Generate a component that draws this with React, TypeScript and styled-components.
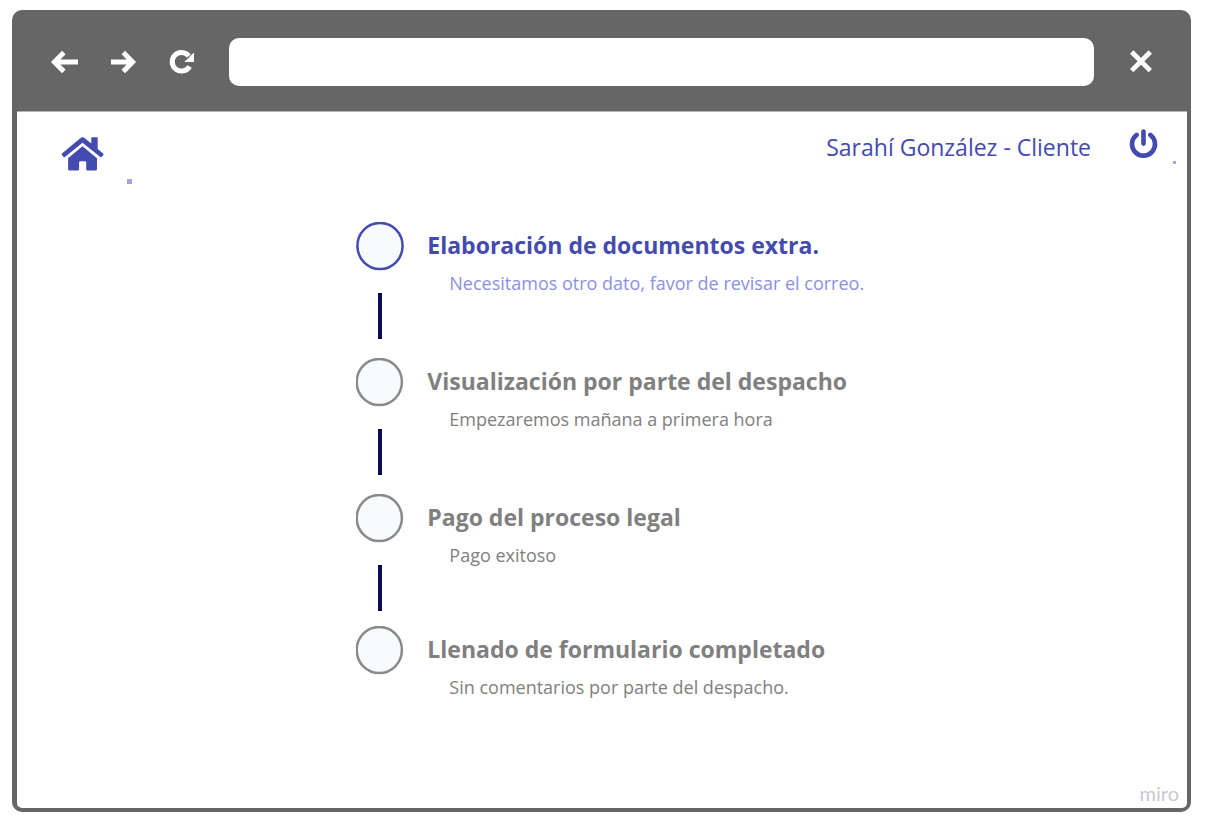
import React from "react";
import styled, { createGlobalStyle } from "styled-components";

const colors = {
  frame: "#666666",
  brand: "#434ab0",
  brandSoft: "#8b90e4",
  muted: "#808080",
  mutedStroke: "#8a8a8a",
  connector: "#0b0b4f",
  marker: "#f7fbfd",
};

const GlobalStyle = createGlobalStyle`
  *, *::before, *::after { box-sizing: border-box; }
  body {
    margin: 0;
    background: #ffffff;
    font-family: "Open Sans", "Noto Sans", sans-serif;
  }
`;

const Page = styled.div`
  display: flex;
  min-height: 100vh;
  padding: 10px 15px 17px 12px;
`;

const BrowserWindow = styled.div`
  display: flex;
  flex: 1;
  flex-direction: column;
  min-width: 0;
  padding: 0 4px 4px 5px;
  border-radius: 10px;
  background: ${colors.frame};
`;

const Toolbar = styled.div`
  display: flex;
  align-items: center;
  padding: 28px 34px 25px;
`;

const NavButtons = styled.nav`
  display: flex;
  gap: 32px;
  margin-right: 34px;
`;

const IconButton = styled.button`
  display: flex;
  flex: none;
  padding: 0;
  border: 0;
  background: none;
  color: inherit;
  cursor: pointer;
`;

const ToolbarButton = styled(IconButton)`
  color: #ffffff;
`;

const AddressBar = styled.input`
  flex: 1;
  min-width: 0;
  height: 48px;
  margin-right: 35px;
  padding: 0 16px;
  border: 0;
  border-radius: 10px;
  background: #ffffff;
  font: 18px "Open Sans", sans-serif;
`;

const Content = styled.main`
  display: flex;
  flex: 1;
  flex-direction: column;
  border-top: 1px solid #b4b4b4;
  border-radius: 0 0 5px 5px;
  background: #ffffff;
`;

const Header = styled.header`
  display: flex;
  align-items: flex-start;
  height: 80px;
  padding: 17px 11px 0 44px;
  color: ${colors.brand};
`;

const HomeLink = styled.a`
  display: flex;
  margin: 7px 23px 0 0;
  color: inherit;
`;

const Dot = styled.span<{ $size: number }>`
  flex: none;
  width: ${(p) => p.$size}px;
  height: ${(p) => p.$size}px;
  background: #a5a7d8;
`;

const HomeDot = styled(Dot)`
  margin-top: 50px;
`;

const PowerDot = styled(Dot)`
  margin: 32px 0 0 15px;
`;

const UserName = styled.span`
  margin: 2px 38px 0 auto;
  font-size: 23px;
  line-height: 32px;
`;

const Timeline = styled.ol`
  margin: 0;
  padding: 30px 0 0 29%;
  list-style: none;
`;

const Step = styled.li<{ $height: number }>`
  display: flex;
  gap: 23px;
  height: ${(p) => p.$height}px;
`;

const Track = styled.div`
  display: flex;
  flex: none;
  flex-direction: column;
  align-items: center;
  gap: 22px;
  width: 48px;
`;

const Connector = styled.span`
  width: 4px;
  height: 46px;
  background: ${colors.connector};
`;

const StepTitle = styled.h2<{ $active?: boolean }>`
  margin: 7px 0 0;
  color: ${(p) => (p.$active ? colors.brand : colors.muted)};
  font-size: 23px;
  font-weight: 700;
  line-height: 32px;
`;

const StepNote = styled.p<{ $active?: boolean }>`
  margin: 10px 0 0 22px;
  color: ${(p) => (p.$active ? colors.brandSoft : colors.muted)};
  font-size: 18px;
  line-height: 24px;
`;

const Footer = styled.footer`
  display: flex;
  justify-content: flex-end;
  margin-top: auto;
  padding: 0 8px 2px 0;
`;

const Brand = styled.span`
  color: #c9c8d2;
  font-family: Lato, sans-serif;
  font-size: 20px;
  line-height: 26px;
`;

const BackIcon = () => (
  <svg width="28" height="24" viewBox="0 0 28 24" fill="none" stroke="currentColor" strokeWidth="5" aria-hidden="true">
    <path d="M27 12H4M12.800 2.500L3.500 12l9.300 9.500" />
  </svg>
);

const ForwardIcon = () => (
  <svg width="26" height="24" viewBox="0 0 26 24" fill="none" stroke="currentColor" strokeWidth="5" aria-hidden="true">
    <path d="M0 12h21M12.300 2.500L21.600 12l-9.300 9.500" />
  </svg>
);

const ReloadIcon = () => (
  <svg width="26" height="24" viewBox="0 0 26 24" aria-hidden="true">
    <path d="M20.600 16.400A9.300 9.300 0 1 1 19.800 6" fill="none" stroke="currentColor" strokeWidth="5" />
    <path d="M25 2.500V12h-9.700z" fill="currentColor" />
  </svg>
);

const CloseIcon = () => (
  <svg width="24" height="24" viewBox="0 0 24 24" fill="none" stroke="currentColor" strokeWidth="4.800" aria-hidden="true">
    <path d="M2.700 2l18.600 18.600M21.300 2L2.700 20.600" />
  </svg>
);

const HomeIcon = () => (
  <svg width="43" height="36" viewBox="0 0 43 36" fill="currentColor" aria-hidden="true">
    <path d="M21.500 10.200L36 22.300V33a1.500 1.500 0 0 1-1.500 1.500H26.500a1.300 1.300 0 0 1-1.300-1.300V26.500a1.300 1.300 0 0 0-1.300-1.300h-4.500a1.300 1.300 0 0 0-1.300 1.300v6.700a1.300 1.300 0 0 1-1.300 1.300H8.600A1.500 1.500 0 0 1 7.100 33V22.300z" />
    <path d="M30.300 7.500V2a.8.8 0 0 1 .8-.8h4.800a.8.8 0 0 1 .8.8v11l5.500 4.600a.9.9 0 0 1 .1 1.300l-1.700 2a.9.9 0 0 1-1.300.1L21.500 6.700 3.900 21a.9.9 0 0 1-1.300-.1l-1.700-2a.9.9 0 0 1 .1-1.300L19.300 2.200a3.500 3.500 0 0 1 4.500 0z" />
  </svg>
);

const PowerIcon = () => (
  <svg width="29" height="29" viewBox="0 0 29 29" fill="none" stroke="currentColor" strokeWidth="4.600" strokeLinecap="round" aria-hidden="true">
    <path d="M7.700 5.900a11.500 11.500 0 1 0 13.600 0" />
    <path d="M14.500 2.600v12" />
  </svg>
);

const Marker = ({ active }: { active?: boolean }) => (
  <svg width="48" height="49" viewBox="0 0 48 49" aria-hidden="true">
    <ellipse
      cx={active ? 24 : 23.3}
      cy="24"
      rx="22.600"
      ry="23.100"
      fill={colors.marker}
      stroke={active ? colors.brand : colors.mutedStroke}
      strokeWidth="2.500"
    />
  </svg>
);

const steps = [
  {
    title: "Elaboración de documentos extra.",
    note: "Necesitamos otro dato, favor de revisar el correo.",
    active: true,
    height: 136,
  },
  {
    title: "Visualización por parte del despacho",
    note: "Empezaremos mañana a primera hora",
    height: 136,
  },
  { title: "Pago del proceso legal", note: "Pago exitoso", height: 132 },
  {
    title: "Llenado de formulario completado",
    note: "Sin comentarios por parte del despacho.",
    height: 80,
  },
];

export default function App() {
  return (
    <>
      <GlobalStyle />
      <Page>
        <BrowserWindow>
          <Toolbar>
            <NavButtons>
              <ToolbarButton aria-label="Atrás"><BackIcon /></ToolbarButton>
              <ToolbarButton aria-label="Adelante"><ForwardIcon /></ToolbarButton>
              <ToolbarButton aria-label="Recargar"><ReloadIcon /></ToolbarButton>
            </NavButtons>
            <AddressBar type="text" aria-label="Dirección" />
            <ToolbarButton aria-label="Cerrar"><CloseIcon /></ToolbarButton>
          </Toolbar>
          <Content>
            <Header>
              <HomeLink href="#" aria-label="Inicio"><HomeIcon /></HomeLink>
              <HomeDot $size={5} />
              <UserName>Sarahí González - Cliente</UserName>
              <IconButton aria-label="Cerrar sesión"><PowerIcon /></IconButton>
              <PowerDot $size={3} />
            </Header>
            <Timeline>
              {steps.map((step, index) => (
                <Step key={step.title} $height={step.height}>
                  <Track>
                    <Marker active={step.active} />
                    {index < steps.length - 1 && <Connector />}
                  </Track>
                  <div>
                    <StepTitle $active={step.active}>{step.title}</StepTitle>
                    <StepNote $active={step.active}>{step.note}</StepNote>
                  </div>
                </Step>
              ))}
            </Timeline>
            <Footer>
              <Brand>miro</Brand>
            </Footer>
          </Content>
        </BrowserWindow>
      </Page>
    </>
  );
}
